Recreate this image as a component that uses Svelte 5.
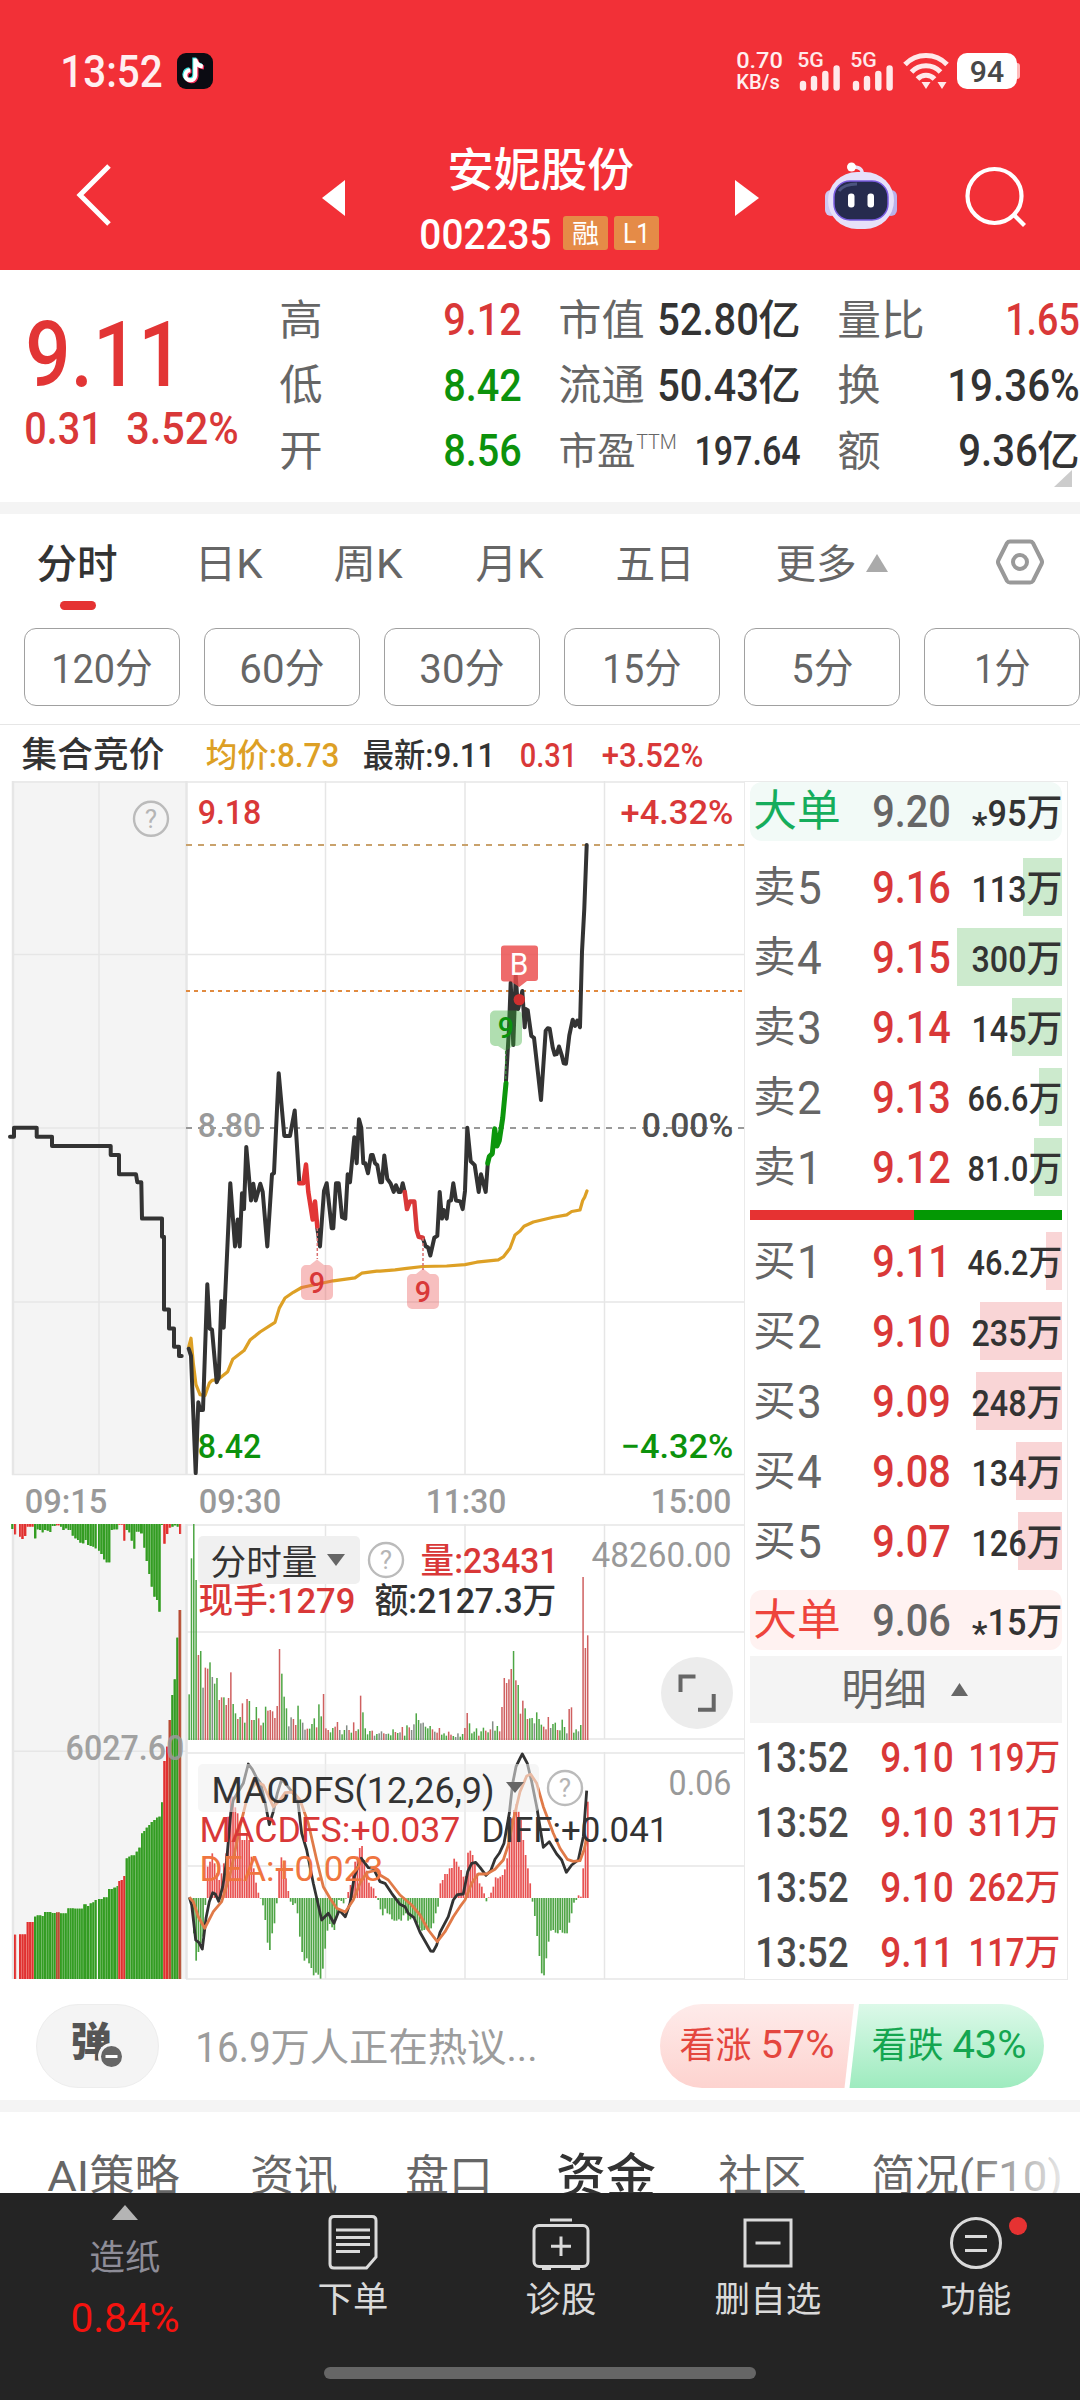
<script>
  const stats = [
    [
      { k: '高', kw: 40, v: '9.12', vw: 75, c: 'red' },
      { k: '低', kw: 40, v: '8.42', vw: 75, c: 'green' },
      { k: '开', kw: 40, v: '8.56', vw: 75, c: 'green' }
    ],
    [
      { k: '市值', kw: 83, v: '52.80', vw: 98, u: '亿', c: 'dark' },
      { k: '流通', kw: 83, v: '50.43', vw: 98, u: '亿', c: 'dark' },
      { k: '市盈', kw: 74, sup: 'TTM', v: '197.64', vw: 103, c: 'dark', small: true }
    ],
    [
      { k: '量比', kw: 84, v: '1.65', vw: 71, c: 'red' },
      { k: '换', kw: 40, v: '19.36%', vw: 129, c: 'dark' },
      { k: '额', kw: 40, v: '9.36', vw: 76, u: '亿', c: 'dark' }
    ]
  ];

  const periods = [['分时', 78], ['日K', 65], ['周K', 66], ['月K', 65], ['五日', 76]];
  const minutes = [['120分', 98], ['60分', 82], ['30分', 82], ['15分', 76], ['5分', 59], ['1分', 53]];

  const sells = [
    ['5', '9.16', '113', 39], ['4', '9.15', '300', 105], ['3', '9.14', '145', 50],
    ['2', '9.13', '66.6', 23], ['1', '9.12', '81.0', 28]
  ];
  const buys = [
    ['1', '9.11', '46.2', 16], ['2', '9.10', '235', 82], ['3', '9.09', '248', 86],
    ['4', '9.08', '134', 46], ['5', '9.07', '126', 44]
  ];
  const trades = [['9.10', '119'], ['9.10', '311'], ['9.10', '262'], ['9.11', '117']];
  const sections = [['AI策略', 129], ['资讯', 84], ['盘口', 84], ['资金', 96], ['社区', 85], ['简况(F10)', 188]];

  // Chart data is kept in sample units; these map it to chart pixels.
  const K = 0.47829;
  const line = (d, f) => d.trim().split(/\s+/).map((p) => f(...p.split(',').map(Number)).map((n) => n.toFixed(1)).join(',')).join(' ');
  const left = (x, y) => [x / 3, 770 + y * K];
  const right = (x, y) => [380 + x / 3, 770 + y * K];
  const lowL = (x, y) => [x / 3, 1500 + y / 3];
  const lowR = (x, y) => [380 + x / 3, 1500 + y / 3];

  const auction = line('30,767 42,767 42,748 110,748 110,767 156,767 156,786 332,786 332,805 357,805 357,845 408,845 412,862 424,862 426,938 486,938 486,976 492,976 492,1128 507,1128 507,1168 522,1168 522,1206 537,1206 537,1225 545,1225', left);
  const priceA = line('566,1210 573,1225 587,1470 595,1322 600,1338 609,1338 622,1075 629,1168 636,1170 650,1280 656,1270 664,1110 671,1166 691,864 705,996 713,940 719,996 726,885 732,918 739,788 753,900 760,865 767,900 781,865 788,882 802,996 816,845 822,843 836,634 853,765 870,765 884,712 898,862', left);
  const dropA = line('898,864 910,864 918,825 925,882 938,940 945,902 952,955', left);
  const priceB = line('952,958 960,996 972,880 980,864 995,958 1000,958 1008,864 1016,864 1026,935 1036,938 1043,845 1050,862 1063,768 1070,822 1077,730 1084,748 1090,822 1096,822 1104,843 1113,805 1118,805 1125,822 1132,826 1141,862 1146,862', left)
    + ' ' + line('6,862 13,806 22,855 32,865 41,882 48,868 56,882 62,882 68,864 74,882', right);
  const dropB = line('74,882 81,918 90,902 103,902 110,962 116,976 128,978', right);
  const priceC = line('128,978 137,996 144,998 151,1015 163,978 172,974 179,882 186,938 191,920 200,938 206,902 213,900 220,864 228,900 241,902 248,918 255,880 262,748 272,818 284,826 296,882 303,845 317,882 323,825', right);
  const rise = line('323,822 328,808 337,802 344,750 351,786 358,775 368,728 378,655', right);
  const priceD = line('378,650 387,540 392,445 400,575 407,430 414,500 420,485 427,462 434,538 438,500 443,502 454,556 462,560 483,690 497,545 503,540 509,541 518,580 524,595 530,594 537,578 545,596 551,613 558,614 568,555 578,522 585,535 592,524 600,538 606,380 613,290 620,157', right);
  const average = line('566,1206 573,1188 580,1240 588,1285 600,1306 615,1308 628,1282 636,1276 655,1274 683,1258 698,1232 732,1214 750,1192 780,1175 825,1155 838,1125 855,1104 880,1092 905,1082 950,1075 1000,1068 1065,1062 1085,1052 1130,1048', left)
    + ' ' + line('0,1048 45,1045 80,1042 128,1038 200,1037 255,1034 290,1029 355,1024 370,1018 390,1000 405,972 420,964 432,954 460,945 520,935 560,930 575,923 600,920 608,900 614,893 621,880', right);

  const diff = line('568,1192 575,1215 587,1320 597,1328 607,1347 618,1255 628,1205 638,1178 646,1182 656,1204 668,1160 680,1080 692,940 700,900 712,880 730,850 745,792 757,808 768,830 782,850 795,905 808,974 820,935 832,880 845,838 860,855 880,880 893,900 905,1000 920,1050 940,1150 965,1260 985,1240 1002,1270 1018,1230 1036,1250 1050,1210 1063,1130 1084,1075 1105,1103 1120,1105', lowL)
    + ' ' + line('0,1145 15,1150 35,1180 60,1213 75,1220 85,1240 102,1253 120,1297 152,1353 160,1354 170,1335 180,1297 205,1250 220,1200 232,1184 250,1182 263,1115 275,1090 287,1087 300,1102 318,1126 332,1112 345,1078 358,1060 372,1030 388,940 398,850 408,800 420,775 427,762 442,790 455,845 470,920 490,1042 508,1025 530,1062 545,1080 559,1117 575,1095 595,1080 610,1010 620,872', lowR);
  const dea = line('568,1192 580,1205 595,1250 614,1285 640,1235 665,1205 690,1125 720,980 745,880 770,845 790,855 820,920 840,900 855,878 880,876 900,900 925,970 950,1080 970,1160 990,1195 1010,1225 1036,1236 1060,1200 1080,1150 1100,1118 1130,1110', lowL)
    + ' ' + line('0,1125 25,1140 60,1185 95,1215 120,1245 145,1290 172,1325 195,1295 220,1250 240,1220 255,1200 275,1150 295,1122 320,1122 345,1108 370,1080 385,1035 400,960 420,875 440,828 452,823 470,850 490,920 520,1000 540,1045 562,1078 580,1084 600,1082 612,1050 620,1015', lowR);

  // One bar per minute: bar top followed by its colour (g fall, r rise, k flat).
  const volume = '583g 175g 72g 240g 465r 453g 563k 503r 506r 487g 531k 551g 534g 600r 592r 592g 615r 594r 517r 612g 640g 657r 651g 610r 668g 597r 603g 660r 660g 621g 655r 676r 668g 620g 632r 630r 634r 654r 618r 447r 521g 590g 625g 679k 652k 657r 675r 617g 658g 668k 689k 686r 686g 672g 655g 682r 613g 649g 582r 685r 690r 697g 684g 680r 666r 690k 703g 690g 676k 690r 698g 667r 693r 688g 587r 637g 685g 703g 693g 692r 707k 702g 700k 694k 700r 702k 701g 706g 688g 696r 699g 697k 681r 707g 676g 682r 690k 673k 640g 660g 670k 668k 680g 685g 678g 688r 695k 698r 684r 704g 700g 707g 695r 704r 708g 711k 700k 710g 702g 684r 639r 670g 700g 695g 685g 707r 694g 683g 692r 697g 688r 664k 692g 678g 694r 621r 534r 549r 538r 507r 453g 541r 555g 641r 602r 625g 657r 655g 654g 670k 637g 657g 674g 680r 688r 651r 684k 672g 668g 690r 691g 659g 681g 700k 627r 622r 698g 688g 694k 675g 231r 444r 406r'
    .split(' ').map((s, i) => ({ x: 188.4 + i * 2.3172, y: 1500 + parseInt(s) / 3, c: s.at(-1) }));

  const macd = '1194 1215 1300 1382 1356 1330 1310 1215 1100 1085 1060 1090 1120 1140 1120 1090 1060 950 865 890 922 940 985 1020 1020 1000 1020 1070 1105 1148 1178 1196 1216 1260 1328 1350 1300 1270 1210 1110 1072 1092 1135 1173 1205 1215 1210 1240 1310 1356 1382 1375 1390 1404 1426 1418 1424 1436 1406 1346 1292 1272 1282 1290 1250 1200 1203 1210 1196 1176 1155 1120 1085 1070 1044 1038 1080 1112 1148 1160 1165 1188 1200 1228 1246 1226 1240 1243 1258 1262 1262 1258 1262 1246 1240 1262 1258 1252 1255 1270 1285 1292 1290 1288 1290 1285 1270 1240 1220 1150 1140 1122 1122 1105 1104 1076 1085 1100 1110 1130 1128 1058 1052 1065 1090 1120 1150 1160 1180 1204 1192 1178 1160 1132 1135 1130 1125 1108 1075 980 955 930 912 935 960 1020 1065 1105 1150 1205 1248 1308 1368 1420 1426 1375 1325 1292 1290 1298 1300 1290 1298 1300 1300 1268 1240 1208 1200 1186 1190 1105 1020 905'
    .split(' ').map((s, i, a) => ({ x: 188.4 + (i * 172 / (a.length - 1)) * 2.3172, v: (1194 - Number(s)) / 3 }));

  // Opening auction bars: start, end, edge, colour.
  const parseBars = (d) => d.trim().split(/\s+/).map((s) => {
    const [a, b, y] = s.split(',').map(parseFloat);
    return { a: a / 3, b: b / 3, y: 1500 + y / 3, c: s.at(-1) };
  }).flatMap((s) => {
    const n = Math.max(1, Math.round((s.b - s.a) / 2.5));
    const w = (s.b - s.a) / n;
    return Array.from({ length: n }, (_, i) => ({ x: s.a + i * w, w, y: s.y, c: s.c }));
  });
  const unmatched = parseBars('34,41,87g 42,49,103r 57,64,110r 64,72,117r 72,80,108r 80,102,80r 102,110,115g 110,117,88g 117,125,90g 125,132,97g 132,140,90g 140,148,92g 148,155,96g 155,168,78g 168,180,76r 180,187,80g 187,195,90g 195,203,85g 203,215,90g 215,223,107g 223,231,115g 231,238,120g 238,246,128g 246,254,130g 254,261,120g 261,269,135g 269,277,138g 277,284,140g 284,291,145g 294,301,152g 301,309,162g 309,317,178g 317,332,187g 332,340,90g 340,355,88g 355,370,74r 370,377,122r 377,385,90g 385,392,97g 392,400,122g 400,407,146g 407,420,95g 420,430,100g 430,437,143g 437,445,183g 445,452,222g 452,460,260g 460,468,290g 468,475,300g 475,483,335g 483,490,75g 490,498,131r 498,506,102r 506,514,83r 514,522,80g 522,530,76g 530,537,80g 537,544,102r');
  const matched = parseBars('42,49,1304r 57,80,1303r 80,102,1266r 102,110,1250g 110,125,1246g 125,132,1248g 132,155,1236g 155,168,1239g 168,180,1237b 180,202,1240g 202,223,1225g 223,250,1226g 250,261,1213g 261,269,1218g 269,277,1210g 277,284,1207g 284,291,1200g 294,309,1197g 309,324,1192g 324,340,1167g 340,350,1163g 350,355,1158g 355,362,1143r 362,370,1140r 370,377,1128r 377,385,1075g 385,392,1070g 392,407,1066g 407,415,1055g 415,423,1043g 423,430,1000g 430,437,993g 437,445,983g 445,452,975g 452,460,966g 460,468,960g 468,475,953g 475,483,950g 483,490,907g 490,498,783r 498,506,740r 506,514,660b 514,521,585g 521,529,538g 529,536,413g 536,544,330b');
</script>

<!-- A run of text condensed or widened to a given ink width. -->
{#snippet T(s, w, size, cls = '')}
  <svg class="t {cls}" width={w} height={size}><text x={-size * 0.04} y={size * 0.87} font-size={size} textLength={w + size * 0.08} lengthAdjust="spacingAndGlyphs">{s}</text></svg>
{/snippet}

{#snippet C(s, x, y, w, size, cls)}
  <text class={cls} x={x - size * 0.04} {y} font-size={size} textLength={w + size * 0.08} lengthAdjust="spacingAndGlyphs">{s}</text>
{/snippet}

{#snippet help(x, y)}
  <circle cx={x} cy={y} r="17" fill="none" stroke="#bbb" stroke-width="2.4" />
  <text class="q" {x} y={y + 9} font-size="26" text-anchor="middle">?</text>
{/snippet}

{#snippet signal()}
  <div class="signal">
    {@render T('5G', 25, 20, 'm')}
    <svg width="42" height="26">
      <path d="M4 19V22.5M15 14V22.5M26.3 9V22.5M37.6 3.5V22.5" stroke="#ffe9ea" stroke-width="6.4" stroke-linecap="round" />
    </svg>
  </div>
{/snippet}

{#snippet level(side, [n, p, v, w])}
  {@const long = v.length > 3}
  <div class="level">
    <i class={side === '卖' ? 'g' : 'r'} style:width="{w}px"></i>
    <span class="gray name">{@render T(side, 39, 42)}{@render T(n, 21, 47)}</span>
    <span class="red">{@render T(p, 75, 45, 'm')}</span>
    <span class="qty">{@render T(v, long ? 58 : 52, long ? 35 : 37, 'm')}{@render T('万', long ? 31 : 33, long ? 35 : 37, 'm')}</span>
  </div>
{/snippet}

<main>
  <header>
    <div class="status">
      {@render T('13:52', 99, 44, 'm soft')}
      <svg class="tiktok" width="36" height="36" viewBox="0 0 36 36">
        <rect width="36" height="36" rx="9" fill="#0b0b12" />
        <g fill="none" stroke-width="4" stroke-linecap="butt">
          <path d="M18.3 5.5V22.5a5 5 0 1 1-5-5.2M18.3 6.5c.8 4 3.5 6.5 7.5 7" stroke="#35e6e2" transform="translate(-1 -1)" />
          <path d="M18.3 5.5V22.5a5 5 0 1 1-5-5.2M18.3 6.5c.8 4 3.5 6.5 7.5 7" stroke="#f5305c" transform="translate(1.2 1)" />
          <path d="M18.3 5.5V22.5a5 5 0 1 1-5-5.2M18.3 6.5c.8 4 3.5 6.5 7.5 7" stroke="#fff" />
        </g>
      </svg>
      <div class="speed">{@render T('0.70', 45, 22, 'm soft')}{@render T('KB/s', 42, 19.5, 'm soft')}</div>
      {@render signal()}
      {@render signal()}
      <svg class="wifi" width="46" height="38" viewBox="0 0 46 38">
        <g fill="none" stroke="#ffe9ea" stroke-width="5">
          <path d="M2 12.5a29 29 0 0 1 42 0" />
          <path d="M8.5 20a20 20 0 0 1 29 0" />
          <path d="M14.5 27a11.5 11.5 0 0 1 17 0" />
        </g>
        <path d="M18.5 30h9l-4.5 7zM34.5 30h9l-4.5 7z" fill="#ffe9ea" />
      </svg>
      <div class="battery">{@render T('94', 32, 30, 'm')}</div>
    </div>

    <div class="nav">
      <svg class="back" width="36" height="64"><path d="M33 3 4 32 33 61" fill="none" stroke="#fff" stroke-width="5" /></svg>
      <svg class="prev" width="23" height="36"><path d="M23 0V36L0 18z" fill="#fff" /></svg>
      <div class="title">
        {@render T('安妮股份', 183, 46, 'm')}
        <div class="code">
          {@render T('002235', 129, 42, 'm')}
          <span class="badge first">{@render T('融', 25, 26)}</span>
          <span class="badge">{@render T('L1', 25, 28)}</span>
        </div>
      </div>
      <svg class="next" width="24" height="36"><path d="M0 0V36L24 18z" fill="#fff" /></svg>
      <svg class="robot" width="72" height="68" viewBox="0 0 72 68">
        <path d="M37 13c1-5-2-8-8-8" fill="none" stroke="#e9e4fa" stroke-width="3.5" />
        <circle cx="26.500" cy="5" r="4.500" fill="#fff" />
        <rect x="0" y="28" width="12" height="26" rx="6" fill="#cfc8f2" />
        <rect x="60" y="28" width="12" height="26" rx="6" fill="#b9b2ea" />
        <rect x="3" y="10" width="66" height="57" rx="29" fill="#e6e1fa" />
        <rect x="9" y="19" width="54" height="39" rx="16" fill="#262b4e" stroke="#7a5ce0" stroke-width="1.500" />
        <path d="M14 29q5-7 18-7" fill="none" stroke="#4b547e" stroke-width="3" />
        <rect x="23" y="31.500" width="6.500" height="14" rx="3" fill="#fff" />
        <rect x="42.500" y="31.500" width="6.500" height="14" rx="3" fill="#fff" />
      </svg>
      <svg class="search" width="62" height="62" fill="none" stroke="#fff" stroke-width="4.2"><circle cx="29.500" cy="30" r="27" /><path d="m48 48 11.500 11.500" /></svg>
    </div>
  </header>

  <section class="quote">
    <div class="last">
      {@render T('9.11', 151, 91, 'm')}
      <div class="change">{@render T('0.31', 75, 44, 'm')}{@render T('3.52%', 109, 44, 'm')}</div>
    </div>
    {#each stats as group}
      <div class="group">
        {#each group as s}
          <div class="stat">
            <span class="key">
              {@render T(s.k, s.kw, s.small ? 38 : 42)}
              {#if s.sup}{@render T(s.sup, 39, 21, 'sup')}{/if}
            </span>
            <span class="val {s.c}">
              {@render T(s.v, s.vw, s.small ? 40 : 45, 'm')}
              {#if s.u}{@render T(s.u, 39, 42, 'm')}{/if}
            </span>
          </div>
        {/each}
      </div>
    {/each}
    <svg class="corner" width="18" height="17"><path d="M18 0V17H0z" fill="#ccc" /></svg>
  </section>

  <nav class="periods">
    {#each periods as [label, w], i}
      <span class:on={i === 0}>{@render T(label, w, 40, i === 0 ? 'm' : '')}</span>
    {/each}
    <span>{@render T('更多', 78, 40)}<svg class="up" width="22" height="18"><path d="M11 0 22 18H0z" fill="#aaa" /></svg></span>
    <svg width="48" height="46" fill="none" stroke="#999" stroke-width="4"><path d="M14 2.500H34Q36 2.500 37 4L45.500 21Q46.500 23 45.500 25L37 42Q36 43.500 34 43.500H14Q12 43.500 11 42L2.500 25Q1.500 23 2.500 21L11 4Q12 2.500 14 2.500z" /><circle cx="24" cy="23" r="7" /></svg>
  </nav>

  <div class="minutes">
    {#each minutes as [label, w]}<button>{@render T(label, w, 41)}</button>{/each}
  </div>

  <div class="summary">
    {@render T('集合竞价', 140, 35, 'm dark')}
    {@render T('均价:8.73', 131, 33, 'm gold')}
    {@render T('最新:9.11', 130, 33, 'm dark')}
    {@render T('0.31', 55, 33, 'm red')}
    {@render T('+3.52%', 99, 33, 'm red')}
  </div>

  <div class="board">
    <svg class="chart" width="744" height="1199" viewBox="0 781 744 1199">
      <rect x="12" y="781" width="175" height="694" fill="#f4f4f4" />
      <rect x="12" y="1524" width="175" height="455" fill="#f4f4f4" />
      <g class="grid">
        <path d="M12 782H744M12 1474.500H744M12 954.500H744M12 1128H187M12 1302H744" />
        <path d="M99 781V1475M325.500 781V1475M465 781V1475M604.500 781V1475" />
        <path d="M12 1751.300H187M186 1632H744M186 1739H744M186 1753H744M186 1866H744M186 1979H744M186 1525H744" />
        <path d="M99 1524V1979M325.500 1524V1739M465 1524V1739M604.500 1524V1739M325.500 1752V1979M465 1752V1979M604.500 1752V1979" />
        <path d="M13 781V1475M186.500 781V1475M13 1524V1979M186.500 1524V1979" stroke-width="2.500" />
      </g>
      <path d="M186 845H744" stroke="#c9a26c" stroke-width="1.800" stroke-dasharray="6 6" />
      <path d="M186 991H744" stroke="#e08a40" stroke-width="2" stroke-dasharray="4 4" />
      <path d="M186 1128H744" stroke="#999" stroke-width="2" stroke-dasharray="6 6" />
      {@render help(151, 818.8)}

      <g fill="none" stroke="#333" stroke-width="4" stroke-linejoin="round" stroke-linecap="round">
        <polyline points={auction} />
        <polyline points={average} stroke="#dda025" stroke-width="3.200" />
        <polyline points={priceA} /><polyline points={priceB} /><polyline points={priceC} /><polyline points={priceD} />
        <polyline points={dropA} stroke="#e23535" stroke-width="4.500" />
        <polyline points={dropB} stroke="#d93838" stroke-width="4.500" />
        <polyline points={rise} stroke="#0c960c" stroke-width="5" />
      </g>

      {@render C('9.18', 199, 823.5, 61, 34, 'm red')}
      {@render C('8.80', 199, 1136.500, 61, 34, 'm mute')}
      {@render C('8.42', 199, 1458, 61, 34, 'm green')}
      {@render C('+4.32%', 622, 823.5, 110, 34, 'm red')}
      {@render C('0.00%', 643, 1136.500, 89, 34, 'm dim')}
      {@render C('−4.32%', 622, 1458, 110, 34, 'm green')}
      {@render C('09:15', 26, 1512.500, 80, 34, 'm mute')}
      {@render C('09:30', 200, 1512.500, 80, 34, 'm mute')}
      {@render C('11:30', 427, 1512.500, 78, 34, 'm mute')}
      {@render C('15:00', 652, 1512.500, 78, 34, 'm mute')}

      <path d="M317.300 1228V1259M423 1238V1270" stroke="#d97070" stroke-width="1.500" stroke-dasharray="3 2" />
      <path d="M505.700 1051V1081" stroke="#3c8a3c" stroke-width="1.500" stroke-dasharray="3 2" />
      <path d="M306 1265H310L317 1259.500 324 1265H328a5 5 0 0 1 5 5V1295a5 5 0 0 1-5 5H306a5 5 0 0 1-5-5V1270a5 5 0 0 1 5-5z" fill="#ec6060" fill-opacity=".4" />
      <path d="M412 1274H416L423 1268.500 430 1274H434a5 5 0 0 1 5 5V1304a5 5 0 0 1-5 5H412a5 5 0 0 1-5-5V1279a5 5 0 0 1 5-5z" fill="#ec6060" fill-opacity=".4" />
      <path d="M495 1010.500H517a5 5 0 0 1 5 5V1041a5 5 0 0 1-5 5H513L505.700 1051 498 1046H495a5 5 0 0 1-5-5V1015.500a5 5 0 0 1 5-5z" fill="#30a830" fill-opacity=".38" />
      <path d="M504 945.500H535a3 3 0 0 1 3 3V978a3 3 0 0 1-3 3H527L519.300 987 511 981.500H504a3 3 0 0 1-3-3V948.500a3 3 0 0 1 3-3z" fill="#ea4a4a" fill-opacity=".82" />
      <circle cx="519.300" cy="999.600" r="5.700" fill="#cf3030" />
      {@render C('9', 310, 1292.500, 14, 29, 'm red')}
      {@render C('9', 416, 1301.500, 14, 29, 'm red')}
      {@render C('9', 499, 1037.500, 14, 29, 'm green')}
      {@render C('B', 511, 974.5, 16, 32, 'white')}

      {#each unmatched as b}
        <rect class="s{b.c}" x={b.x} y="1524" width={b.w} height={b.y - 1524} /><rect class="a{b.c}" x={b.x} y="1524" width={b.w - 0.6} height={b.y - 1524} />
      {/each}
      {#each matched as b}
        <rect class="s{b.c}" x={b.x} y={b.y} width={b.w} height={1979 - b.y} /><rect class="a{b.c}" x={b.x} y={b.y} width={b.w - 0.6} height={1979 - b.y} />
      {/each}
      {@render C('6027.60', 67, 1760, 116, 35, 'm mute see')}

      {#each volume as b}
        <rect class="v{b.c}" x={b.x} y={b.y} width="1.500" height={1740 - b.y} />
      {/each}
      <rect x="198" y="1536" width="162" height="48" rx="5" fill="#f0f0f0" />
      {@render C('分时量', 212, 1575, 104, 35, 'dark')}
      <path d="M327 1554H345L336 1566z" fill="#666" />
      {@render help(386, 1560)}
      {@render C('量:23431', 422, 1573, 135, 35, 'm red')}
      {@render C('48260.00', 593, 1567, 137, 35, 'mute')}
      {@render C('现手:1279', 200, 1613, 154, 35, 'm red')}
      {@render C('额:2127.3万', 376, 1613, 179, 35, 'm dark')}
      <circle cx="697" cy="1693" r="36" fill="#ececec" />
      <path d="M680.500 1692V1676.500H695.500M713.700 1694V1709.700H698" fill="none" stroke="#666" stroke-width="4" />

      {#each macd as b}
        <rect class={b.v > 0 ? 'up1' : 'dn1'} x={b.x} y={1898 - Math.max(b.v, 0)} width="1.700" height={Math.abs(b.v)} />
      {/each}
      <g fill="none" stroke-width="2.800" stroke-linejoin="round">
        <polyline points={diff} stroke="#333" />
        <polyline points={dea} stroke="#e07a48" />
      </g>
      <rect x="198" y="1764" width="341" height="48" rx="5" fill="#eee" fill-opacity=".55" />
      {@render C('MACDFS(12,26,9)', 213, 1802.5, 280, 36, 'dark')}
      <path d="M506 1782H524L515 1793z" fill="#666" />
      {@render help(565, 1788)}
      {@render C('0.06', 670, 1795, 60, 35, 'mute')}
      {@render C('MACDFS:+0.037', 201, 1842, 258, 35, 'red')}
      {@render C('DIFF:+0.041', 483, 1842, 184, 35, 'dark')}
      {@render C('DEA:+0.023', 201, 1881, 181, 35, 'orange')}
    </svg>

    <aside>
      <div class="big sell"><span>{@render T('大单', 84, 43)}</span><span class="gray">{@render T('9.20', 75, 45, 'm')}</span><span class="qty">{@render T('*', 13, 34, 'm star')}{@render T('95', 36, 37, 'm')}{@render T('万', 33, 37, 'm')}</span></div>
      <div class="levels sell-levels">
        {#each sells as row}{@render level('卖', row)}{/each}
      </div>
      <div class="ratio"></div>
      <div class="levels">
        {#each buys as row}{@render level('买', row)}{/each}
      </div>
      <div class="big buy"><span>{@render T('大单', 84, 43)}</span><span class="gray">{@render T('9.06', 75, 45, 'm')}</span><span class="qty">{@render T('*', 13, 34, 'm star')}{@render T('15', 36, 37, 'm')}{@render T('万', 33, 37, 'm')}</span></div>
      <div class="detail">{@render T('明细', 82, 43)}<svg width="17" height="13"><path d="M8.500 0 17 13H0z" fill="#666" /></svg></div>
      <div class="trades">
        {#each trades as [p, v]}
          <div><span class="time">{@render T('13:52', 90, 42, 'm')}</span>{@render T(p, 70, 42, 'm')}<span class="pair">{@render T(v, 53, 38, 'm')}{@render T('万', 33, 36, 'm')}</span></div>
        {/each}
      </div>
    </aside>
  </div>

  <div class="talk">
    <div class="danmu">
      {@render T('弹', 38, 40, 'x')}
      <svg class="minus" width="27" height="27"><circle cx="13.500" cy="13.500" r="12" fill="#666" stroke="#f4f4f4" stroke-width="3" /><path d="M7.500 13.500h12" stroke="#fff" stroke-width="3" /></svg>
    </div>
    <div class="hot">{@render T('16.9', 72, 42)}{@render T('万人正在热议...', 264, 39)}</div>
    <div class="vote">
      <svg width="384" height="84">
        <defs>
          <linearGradient id="bull" x2="0" y2="1"><stop stop-color="#feebea" /><stop offset="1" stop-color="#fdd3cf" /></linearGradient>
          <linearGradient id="bear" x2="0" y2="1"><stop stop-color="#dcf9e9" /><stop offset="1" stop-color="#9eebbf" /></linearGradient>
        </defs>
        <path d="M42 0H194L184.500 84H42a42 42 0 0 1 0-84z" fill="url(#bull)" />
        <path d="M199 0H342a42 42 0 0 1 0 84H189.500z" fill="url(#bear)" />
        <g>
          {@render C('看涨', 21, 54, 69, 36, 'bull')}{@render C('57%', 102, 54, 71, 39, 'bull')}
          {@render C('看跌', 213, 54, 69, 36, 'bear')}{@render C('43%', 294, 54, 71, 39, 'bear')}
        </g>
      </svg>
    </div>
  </div>

  <nav class="sections">
    {#each sections as [label, w], i}
      <span class:on={i === 3}>{@render T(label, w, i === 3 ? 48 : 43, i === 3 ? 'm' : '')}</span>
    {/each}
  </nav>

  <footer>
    <div class="items">
      <div class="sector">
        <svg width="26" height="15"><path d="M13 0 26 15H0z" fill="#b4b4b4" /></svg>
        {@render T('造纸', 68, 35)}
        {@render T('0.84%', 106, 40, 'pct')}
      </div>
      <div class="item">
        <svg width="58" height="56" viewBox="0 0 58 56"><path d="M10 2.500H48Q52 2.500 52 6.500V43L42.500 54H10Q6 54 6 50V6.500Q6 2.500 10 2.500z" /><path d="M12 16H46M12 23.500H46M12 30.500H46M12 37.500H36" /></svg>
        {@render T('下单', 68, 35)}
      </div>
      <div class="item">
        <svg width="58" height="56" viewBox="0 0 58 56"><rect x="2" y="11.500" width="54" height="41" rx="5" /><path d="M18 6H40M29 22.500V42M19 32.300H39M10 54.500H19M39 54.500H48" /></svg>
        {@render T('诊股', 68, 35)}
      </div>
      <div class="item">
        <svg width="58" height="56" viewBox="0 0 58 56"><rect x="6" y="6" width="46" height="46" /><path d="M16.500 29H41.500" /></svg>
        {@render T('删自选', 104, 35)}
      </div>
      <div class="item">
        <svg width="58" height="56" viewBox="0 0 58 56"><circle cx="29" cy="29" r="24.500" /><path d="M18 22.500H40M18 36.500H40" /></svg>
        {@render T('功能', 68, 35)}
        <b></b>
      </div>
    </div>
    <div class="home"></div>
  </footer>
</main>

<style>
  :global(body) { margin: 0; background: #fff; }
  main { width: 1080px; height: 2400px; overflow: hidden; display: flex; flex-direction: column; background: #fff; color: #333; font-family: Roboto, "Noto Sans CJK SC", sans-serif; }
  svg { display: block; flex: none; }
  svg.t { overflow: visible; }
  text, svg.t { fill: currentColor; }
  text { font-weight: inherit; }
  .m { font-weight: 500; }
  .x { font-weight: 900; }
  .soft { color: #ffeff0; }
  .red { color: #d93838; }
  .green { color: #0c920c; }
  .dark { color: #333; }
  .gray { color: #666; }
  .gold { color: #dda025; }
  .mute { color: #999; }
  .dim { color: #505050; }
  .see { opacity: .9; }
  .orange { color: #ef7540; }
  .white { color: #fff; }
  .q { color: #b5b5b5; }
  text.m { font-weight: 500; }

  header { height: 270px; background: #f23037; color: #fff; flex: none; }
  .status { height: 142px; display: flex; align-items: center; padding-left: 62px; box-sizing: border-box; }
  .tiktok { margin-left: 16px; }
  .speed { margin-left: 524px; display: flex; flex-direction: column; gap: 1px; margin-top: -2px; }
  .signal { margin-left: 11px; width: 42px; height: 38px; color: #ffe9ea; }
  .speed + .signal { margin-left: 17px; }
  .signal :global(.t) { margin-left: -1px; margin-top: -2px; }
  .signal svg:last-child { margin-top: -5px; }
  .wifi { margin-left: 9px; }
  .battery { margin-left: 8px; width: 60px; height: 36px; border-radius: 10px; background: #fff; color: #484848; display: flex; align-items: center; justify-content: center; position: relative; }
  .battery::after { content: ''; position: absolute; left: 60px; top: 10px; width: 3px; height: 16px; border-radius: 0 3px 3px 0; background: #fbb; }
  .nav { height: 128px; display: flex; align-items: flex-start; padding-left: 76px; }
  .back { margin-top: 21px; }
  .prev { margin-left: 210px; margin-top: 38px; }
  .title { width: 390px; display: flex; flex-direction: column; align-items: center; margin-top: 4px; }
  .code { display: flex; align-items: center; margin-top: 20px; }
  .badge { width: 45px; height: 34px; border-radius: 3px; background: #e58b47; display: flex; align-items: center; justify-content: center; }
  .first { margin: 0 6px 0 13px; }
  .next { margin-top: 38px; }
  .robot { margin-left: 66px; margin-top: 20px; }
  .search { margin-left: 68px; margin-top: 24px; }

  .quote { height: 232px; display: flex; gap: 40px; padding: 16px 2px 0 26px; box-sizing: border-box; position: relative; flex: none; }
  .last { width: 215px; padding-top: 21px; color: #e23535; }
  .last > :global(.t) { margin-left: 3px; }
  .change { display: flex; gap: 27px; margin-top: 8px; color: #d93838; }
  .group { width: 239px; }
  .stat { height: 65.500px; display: flex; align-items: center; justify-content: space-between; }
  .key, .val { display: flex; align-items: center; gap: 3px; }
  .key { color: #666; font-weight: 400; }
  .key :global(.sup) { align-self: flex-start; font-weight: 300; }
  .corner { position: absolute; left: 1054px; top: 200px; }

  .periods { border-top: 12px solid #f4f4f4; height: 126px; box-sizing: border-box; flex: none; padding-left: 38px; display: grid; grid-template-columns: 158px 139px 142px 140px 160px 219px 48px; align-items: start; color: #666; }
  .periods span { display: flex; align-items: center; height: 98px; position: relative; }
  .periods > svg { margin-top: 25px; }
  .periods .on { color: #333; }
  .periods .on::after { content: ''; position: absolute; left: 22px; top: 87px; width: 36px; height: 9px; border-radius: 4.500px; background: #e53232; }
  .up { margin-left: 11px; }
  .minutes { display: flex; gap: 24px; padding: 0 0 18px 24px; border-bottom: 1.500px solid #e6e6e6; overflow: hidden; height: 78px; flex: none; }
  button { width: 156px; height: 78px; flex: none; border: 1.500px solid #a0a0a0; border-radius: 12px; background: #fff; color: #666; font: inherit; padding: 0; display: flex; align-items: center; justify-content: center; }
  .summary { height: 56px; padding: 3px 0 0 23px; box-sizing: border-box; flex: none; display: grid; grid-template-columns: 184px 157px 157px 82px 100px; align-items: center; }

  .board { height: 1199px; display: flex; flex: none; }
  .grid { fill: none; stroke: #e6e6e6; stroke-width: 1.500; }
  .sg { fill: #7cc070; } .ag { fill: #339c22; }
  .sr { fill: #f08a84; } .ar { fill: #e03030; }
  .sb { fill: #c08060; } .ab { fill: #b84a34; }
  .vg { fill: #4da644; } .vr { fill: #cf6060; } .vk { fill: #848c86; }
  .up1 { fill: #e85252; } .dn1 { fill: #4fa546; }

  aside { width: 324px; box-sizing: border-box; border: 1px solid #eaeaea; padding: 0 5px; }
  .big, .level { display: grid; grid-template-columns: 119px 90px 1fr; align-items: center; padding-left: 5px; }
  .big { height: 59px; box-sizing: border-box; border-radius: 12px; padding-bottom: 3px; }
  .sell { background: #f2faf7; color: #16ad5c; }
  .buy { background: #fff2f1; color: #ee443c; margin-top: 8px; height: 60px; padding-bottom: 2px; }
  .qty { display: flex; align-items: flex-end; justify-content: flex-end; gap: 3px; color: #333; padding: 5px 1px 0 0; }
  .qty :global(.star) { margin-bottom: -9px; }
  .levels { display: grid; gap: 12px; padding: 12px 0; }
  .sell-levels { padding: 17px 0 14px; }
  .level { height: 58px; position: relative; }
  .level span { position: relative; top: -1px; }
  .level i { position: absolute; right: 0; top: 0; height: 58px; }
  .g { background: #cceacd; }
  .r { background: #f9d5d6; }
  .name { display: flex; align-items: center; gap: 5px; }
  .ratio { height: 10px; background: linear-gradient(90deg, #e63232 52.700%, #049804 52.700%); }
  .detail { margin-top: 6px; height: 67px; background: #f4f4f4; color: #666; display: flex; align-items: center; gap: 26px; padding-left: 93px; }
  .trades { color: #d93838; }
  .trades > div { height: 65px; display: flex; align-items: center; padding-left: 7px; }
  .time { color: #4a4a4a; margin-right: 35px; }
  .pair { display: flex; align-items: center; gap: 3px; margin-left: 18px; padding-top: 2px; }

  .talk { height: 120px; box-sizing: border-box; padding: 24px 36px 0; display: flex; align-items: flex-start; flex: none; }
  .danmu { width: 125px; height: 84px; box-sizing: border-box; border: 1px solid #ededed; border-radius: 42px; background: #f4f4f4; color: #555; padding: 16px 0 0 35px; position: relative; }
  .minus { position: absolute; left: 61px; top: 38px; }
  .hot { display: flex; align-items: center; gap: 3px; height: 84px; margin-left: 38px; color: #9c9c9c; }
  .vote { margin-left: 124px; }
  .bull { color: #e4463e; }
  .bear { color: #14a650; }

  .sections { border-top: 12px solid #f4f4f4; height: 81px; flex: none; overflow: hidden; padding-left: 49px; display: grid; grid-template-columns: 203px 155px 151px 162px 153px 200px; color: #666; position: relative; }
  .sections span { display: flex; align-items: center; height: 48px; margin-top: 39px; }
  .sections .on { color: #333; }
  .sections::after { content: ''; position: absolute; right: 0; top: 0; width: 120px; height: 81px; background: linear-gradient(90deg, #fff0, #ffffffe6 90%); }

  footer { height: 207px; background: #242424; color: #dadada; display: flex; flex-direction: column; align-items: center; flex: none; }
  .items { height: 174px; width: 1080px; display: grid; grid-template-columns: 249px repeat(4, 207.750px); }
  .sector { display: flex; flex-direction: column; align-items: center; padding-top: 12px; color: #8e8d98; }
  .sector :global(.t) { margin-top: 20px; }
  .sector :global(.pct) { margin-top: 22px; color: #f5130f; }
  .item { display: flex; flex-direction: column; align-items: center; gap: 12px; padding-top: 21px; position: relative; }
  .item > svg:first-child { fill: none; stroke: #dadada; stroke-width: 3; }
  .item b { position: absolute; left: 137px; top: 24px; width: 18px; height: 18px; border-radius: 50%; background: #e63232; }
  .home { width: 432px; height: 12px; border-radius: 6px; background: #666; }
</style>
